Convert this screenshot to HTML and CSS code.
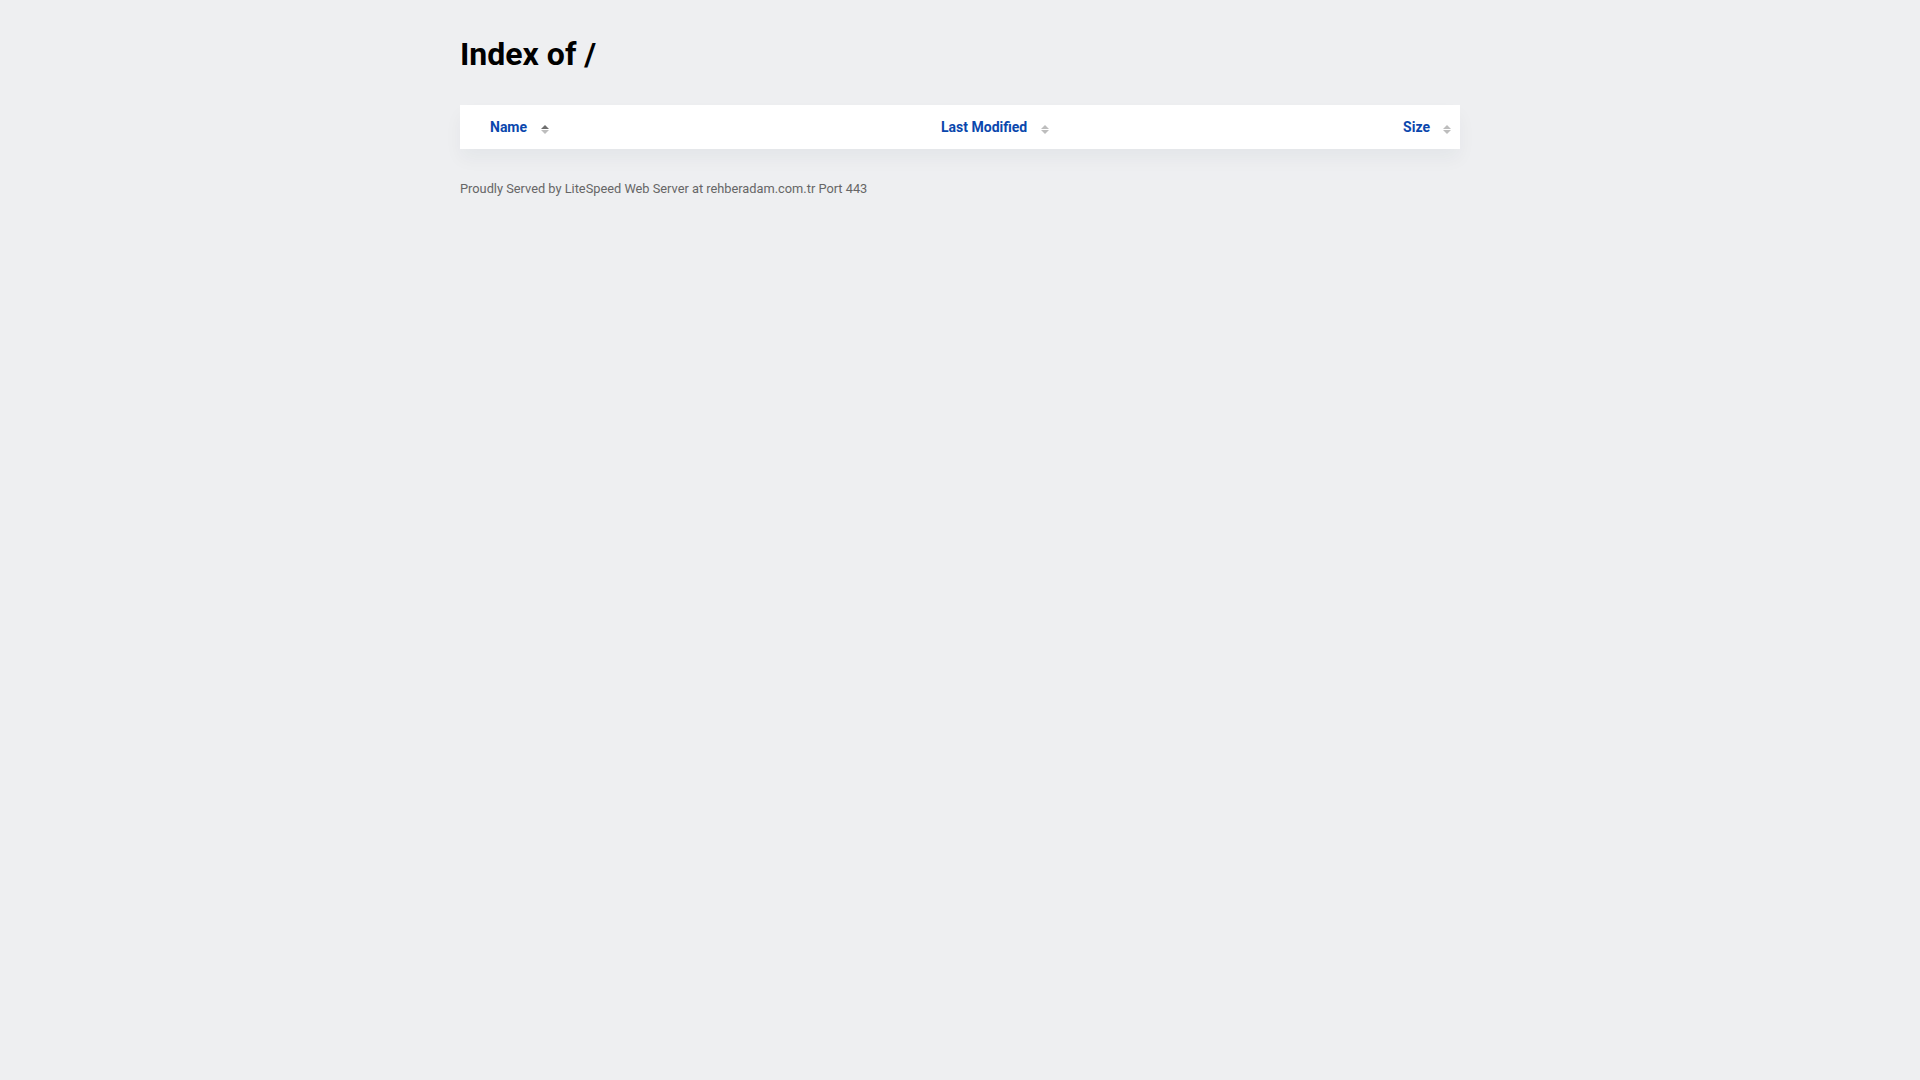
FILE: index.html
```html
<!DOCTYPE html>
<html lang="en">
<head>
<meta charset="utf-8">
<title>Index of /</title>
<link rel="stylesheet" href="styles.css">
</head>
<body>
<div class="wrap">
  <h1 class="title">Index of /</h1>
  <div class="listing">
    <div class="head">
      <div class="col col-name"><a href="#">Name</a><svg class="sort" width="8" height="9" viewBox="0 0 8 9"><polygon class="up active" points="0,4 4,0 8,4"/><polygon class="down" points="0,5 8,5 4,9"/></svg></div>
      <div class="col col-mod"><a href="#">Last Modified</a><svg class="sort" width="8" height="9" viewBox="0 0 8 9"><polygon class="up" points="0,4 4,0 8,4"/><polygon class="down" points="0,5 8,5 4,9"/></svg></div>
      <div class="col col-size"><a href="#">Size</a><svg class="sort sort-last" width="8" height="9" viewBox="0 0 8 9"><polygon class="up" points="0,4 4,0 8,4"/><polygon class="down" points="0,5 8,5 4,9"/></svg></div>
    </div>
  </div>
  <p class="footer">Proudly Served by LiteSpeed Web Server at rehberadam.com.tr Port 443</p>
</div>
</body>
</html>
```

FILE: styles.css
```css
html, body {
  margin: 0;
  padding: 0;
  background: #eeeff1;
  font-family: Roboto, "Liberation Sans", Arial, sans-serif;
}
.wrap {
  width: 1000px;
  margin: 0 auto;
  padding-top: 35px;
}
.title {
  margin: 0 0 32px 0;
  font-size: 32px;
  font-weight: 700;
  color: #000;
  line-height: normal;
}
.listing {
  background: #fff;
  box-shadow: 0 10px 18px rgba(30, 50, 70, 0.045);
}
.head {
  display: flex;
  align-items: center;
  padding: 14px 9px 14px 30px;
  font-size: 14px;
  line-height: 16px;
  font-weight: 700;
}
.col {
  display: flex;
  align-items: center;
}
.col a {
  color: #0a47ad;
  text-decoration: none;
}
.col-name {
  width: 451px;
}
.col-mod {
  flex: 1;
}
.col-size {
  justify-content: flex-end;
}
.sort {
  margin-left: 14px;
  margin-top: 4px;
  display: block;
}
.sort-last {
  margin-left: 13px;
}
.sort polygon {
  fill: #bdbdbd;
}
.sort polygon.active {
  fill: #6f6f6f;
}
.footer {
  margin: 32px 0 0 0;
  font-size: 12.8px;
  line-height: normal;
  color: #666;
}
```
